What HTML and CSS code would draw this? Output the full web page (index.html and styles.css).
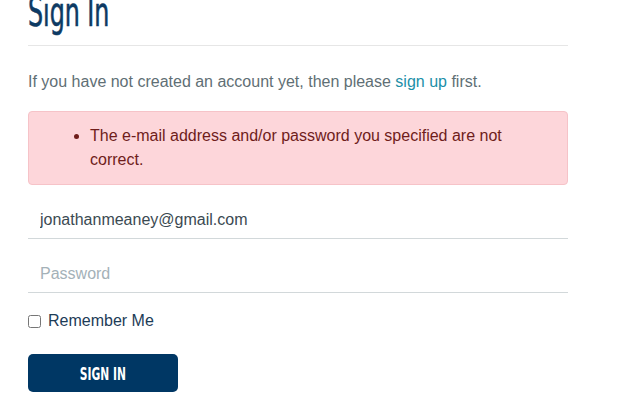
FILE: index.html
```html
<!DOCTYPE html>
<html>
<head>
<meta charset="utf-8">
<link rel="stylesheet" href="styles.css">
</head>
<body>
<div class="page">
  <h1 class="title"><span class="title-text">Sign In</span></h1>
  <p class="intro">If you have not created an account yet, then please <a href="#" class="link">sign up</a> first.</p>
  <div class="alert">
    <ul class="alert-list">
      <li>The e-mail address and/or password you specified are not correct.</li>
    </ul>
  </div>
  <form class="form">
    <input class="field" type="text" value="jonathanmeaney@gmail.com">
    <input class="field" type="password" placeholder="Password">
    <label class="remember"><input type="checkbox" class="check"> Remember Me</label>
    <button type="button" class="btn"><span class="btn-text">SIGN IN</span></button>
  </form>
</div>
</body>
</html>
```
FILE: styles.css
```css
* { box-sizing: border-box; }
html, body { margin: 0; padding: 0; background: #fff; }
body { font-family: "Liberation Sans", Arial, sans-serif; }
.page { width: 540px; margin-left: 28px; }
.title {
  margin: 0;
  height: 46px;
  border-bottom: 1px solid #e6e6e6;
  font-family: "DejaVu Sans", sans-serif;
  font-stretch: condensed;
  font-weight: normal;
  font-size: 40px;
  line-height: 24px;
  color: #0d3a63;
  -webkit-text-stroke: 0.6px #0d3a63;
  overflow: visible;
}
.title-text { display: inline-block; transform: scaleX(0.66); transform-origin: left; }
.intro { margin: 0; padding-top: 27px; font-size: 16px; line-height: 18px; color: #5f6f75; }
.link { color: #1b8fa8; text-decoration: none; }
.alert {
  margin-top: 20px;
  height: 74px;
  background: #fdd6da;
  border: 1px solid #f6c3c8;
  border-radius: 4px;
  color: #6f1d1b;
  font-size: 16px;
  line-height: 24px;
  padding: 12px 30px 0 0;
}
.alert-list { margin: 0; padding-left: 61px; }
.form { display: flex; flex-direction: column; align-items: flex-start; margin-top: 17px; }
.field {
  width: 540px;
  height: 37px;
  border: 0;
  border-bottom: 1px solid #d2d8da;
  padding: 0 12px 1px;
  font-family: "Liberation Sans", Arial, sans-serif;
  font-size: 16px;
  color: #3b4a52;
  outline: none;
  margin-bottom: 17px;
}
.field::placeholder { color: #a4b1b8; }
.remember { display: flex; align-items: center; font-size: 16px; color: #1d3c57; margin-top: 2px; }
.check { width: 13px; height: 13px; margin: 0 7px 0 0; }
.btn {
  margin-top: 24px;
  width: 150px;
  height: 38px;
  background: #003764;
  border: 0;
  border-radius: 5px;
  color: #fff;
  font-family: "DejaVu Sans", sans-serif;
  font-stretch: condensed;
  font-weight: bold;
  font-size: 18px;
}
.btn-text { display: inline-block; transform: scaleX(0.66); }
```
